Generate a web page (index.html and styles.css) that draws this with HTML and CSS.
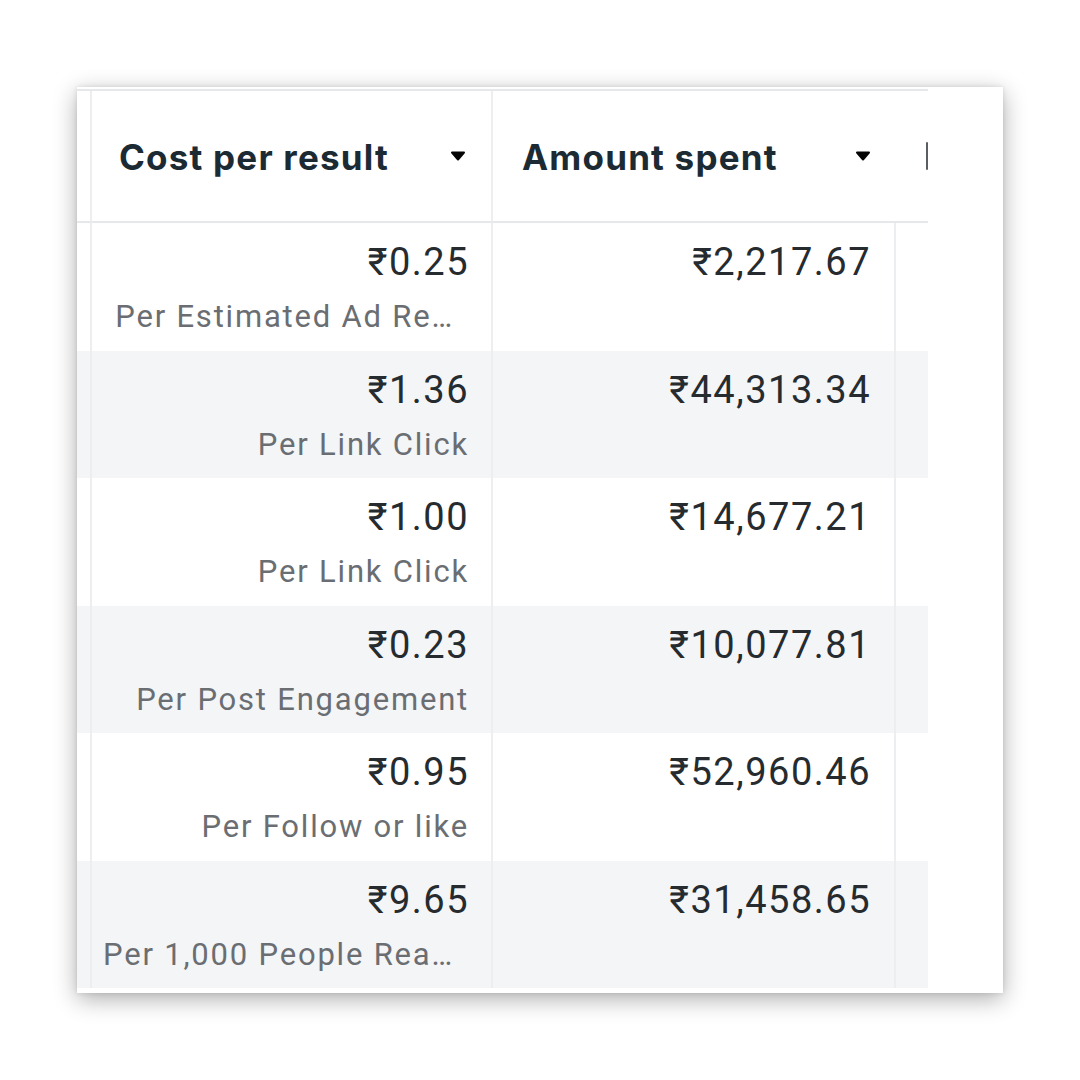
FILE: index.html
```html
<!DOCTYPE html>
<html lang="en">
<head>
<meta charset="utf-8">
<title>Ads table</title>
<link rel="stylesheet" href="styles.css">
</head>
<body>
<div class="card">
  <div class="table">
    <div class="stub head-stub"></div>
    <div class="th th-1"><span class="th-label">Cost per result</span><svg class="caret" width="16" height="10" viewBox="0 0 16 10"><path d="M2 1.5 H14 L8 8.5 Z" fill="#050505" stroke="#050505" stroke-width="2" stroke-linejoin="round"/></svg></div>
    <div class="th th-2"><span class="th-label">Amount spent</span><svg class="caret" width="16" height="10" viewBox="0 0 16 10"><path d="M2 1.5 H14 L8 8.5 Z" fill="#050505" stroke="#050505" stroke-width="2" stroke-linejoin="round"/></svg></div>
    <div class="th th-3"><span class="bar"></span></div>

    <div class="stub"></div>
    <div class="td c1"><span class="num">₹0.25</span><span class="sub cut">Per Estimated Ad Re…</span></div>
    <div class="td c2"><span class="num">₹2,217.67</span></div>
    <div class="td c3"></div>

    <div class="stub alt"></div>
    <div class="td c1 alt"><span class="num">₹1.36</span><span class="sub">Per Link Click</span></div>
    <div class="td c2 alt"><span class="num">₹44,313.34</span></div>
    <div class="td c3 alt"></div>

    <div class="stub"></div>
    <div class="td c1"><span class="num">₹1.00</span><span class="sub">Per Link Click</span></div>
    <div class="td c2"><span class="num">₹14,677.21</span></div>
    <div class="td c3"></div>

    <div class="stub alt"></div>
    <div class="td c1 alt"><span class="num">₹0.23</span><span class="sub">Per Post Engagement</span></div>
    <div class="td c2 alt"><span class="num">₹10,077.81</span></div>
    <div class="td c3 alt"></div>

    <div class="stub"></div>
    <div class="td c1"><span class="num">₹0.95</span><span class="sub">Per Follow or like</span></div>
    <div class="td c2"><span class="num">₹52,960.46</span></div>
    <div class="td c3"></div>

    <div class="stub alt"></div>
    <div class="td c1 alt"><span class="num">₹9.65</span><span class="sub cut">Per 1,000 People Rea…</span></div>
    <div class="td c2 alt"><span class="num">₹31,458.65</span></div>
    <div class="td c3 alt"></div>
  </div>
</div>
</body>
</html>
```

FILE: styles.css
```css
* { box-sizing: border-box; }

html, body {
  margin: 0;
  padding: 0;
  background: #ffffff;
}

body {
  width: 1080px;
  height: 1080px;
  padding: 87px 0 0 77px;
  font-family: Roboto, "Noto Sans", "DejaVu Sans", sans-serif;
}

.card {
  width: 926px;
  height: 906px;
  background: #ffffff;
  box-shadow: 0 6px 22px rgba(0, 0, 0, 0.32), 0 0 5px rgba(0, 0, 0, 0.1);
  padding-top: 2px;
  display: flex;
  overflow: hidden;
}

.table {
  width: 851px;
  border-top: 2px solid #e7e8ea;
  display: grid;
  grid-template-columns: 15px 401px 403px 32px;
  grid-template-rows: 132px repeat(6, 127.5px);
}

.stub {
  border-right: 2px solid #eceef0;
}

.head-stub {
  border-bottom: 2px solid #e7e8ea;
}

.th {
  display: flex;
  align-items: center;
  border-bottom: 2px solid #e7e8ea;
  color: #1c2b33;
}

.th-1 {
  justify-content: space-between;
  padding: 0 25px 0 27px;
  border-right: 2px solid #eceef0;
}

.th-2 {
  justify-content: space-between;
  padding: 0 25px 0 29px;
}

.th-3 {
  padding-left: 30px;
}

.th-label {
  font-family: Inter, "Noto Sans", sans-serif;
  font-weight: 700;
  font-size: 35px;
  letter-spacing: 1.2px;
  white-space: nowrap;
  padding-top: 2px;
}

.caret {
  display: block;
  flex: none;
}

.bar {
  display: block;
  width: 3px;
  height: 28px;
  border-radius: 2px;
  background: #5a5e62;
}

.td {
  display: flex;
  flex-direction: column;
  align-items: flex-end;
  text-align: right;
  padding: 17px 22px 0 10px;
  white-space: nowrap;
}

.c1 {
  border-right: 2px solid #eceef0;
}

.c2 {
  border-right: 2px solid #eceef0;
  padding-right: 23px;
}

.alt {
  background: #f4f5f7;
}

.num {
  font-size: 38px;
  line-height: 44px;
  letter-spacing: 1.5px;
  color: #262b2f;
}

.sub {
  margin-top: 15px;
  font-size: 31px;
  line-height: 36px;
  letter-spacing: 1.8px;
  color: #6a6e72;
}

.sub.cut {
  margin-right: 15px;
}
```
